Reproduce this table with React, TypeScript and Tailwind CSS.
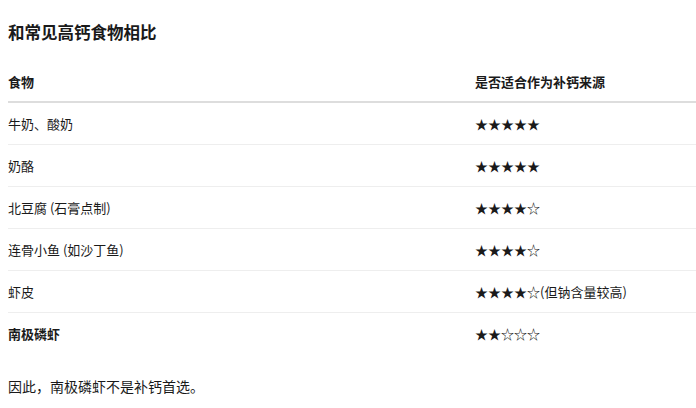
const rows: { food: string; rating: string; bold?: boolean }[] = [
  { food: "牛奶、酸奶", rating: "★★★★★" },
  { food: "奶酪", rating: "★★★★★" },
  { food: "北豆腐 (石膏点制)", rating: "★★★★☆" },
  { food: "连骨小鱼 (如沙丁鱼)", rating: "★★★★☆" },
  { food: "虾皮", rating: "★★★★☆(但钠含量较高)" },
  { food: "南极磷虾", rating: "★★☆☆☆", bold: true },
];

export default function App() {
  return (
    <div className="min-h-screen bg-white pl-2 pt-[20px] text-[#1a1a1a] font-['Noto_Sans_CJK_SC','Noto_Sans',sans-serif]">
      <h2 className="text-[16.5px] leading-[24px] font-bold">和常见高钙食物相比</h2>

      <div className="mt-[18px] text-[13px]">
        <div className="grid grid-cols-[467px_1fr] h-[41px] items-center border-b-2 border-[#dddddd] font-semibold">
          <div>食物</div>
          <div>是否适合作为补钙来源</div>
        </div>
        {rows.map((r, i) => (
          <div
            key={r.food}
            className={
              "grid grid-cols-[467px_1fr] h-[42px] items-center " +
              (i < rows.length - 1 ? "border-b border-[#eeeeee]" : "")
            }
          >
            <div className={r.bold ? "font-bold" : ""}>{r.food}</div>
            <div>{r.rating}</div>
          </div>
        ))}
      </div>

      <p className="mt-[20px] text-[14px] leading-[22px]">因此，南极磷虾不是补钙首选。</p>
    </div>
  );
}
